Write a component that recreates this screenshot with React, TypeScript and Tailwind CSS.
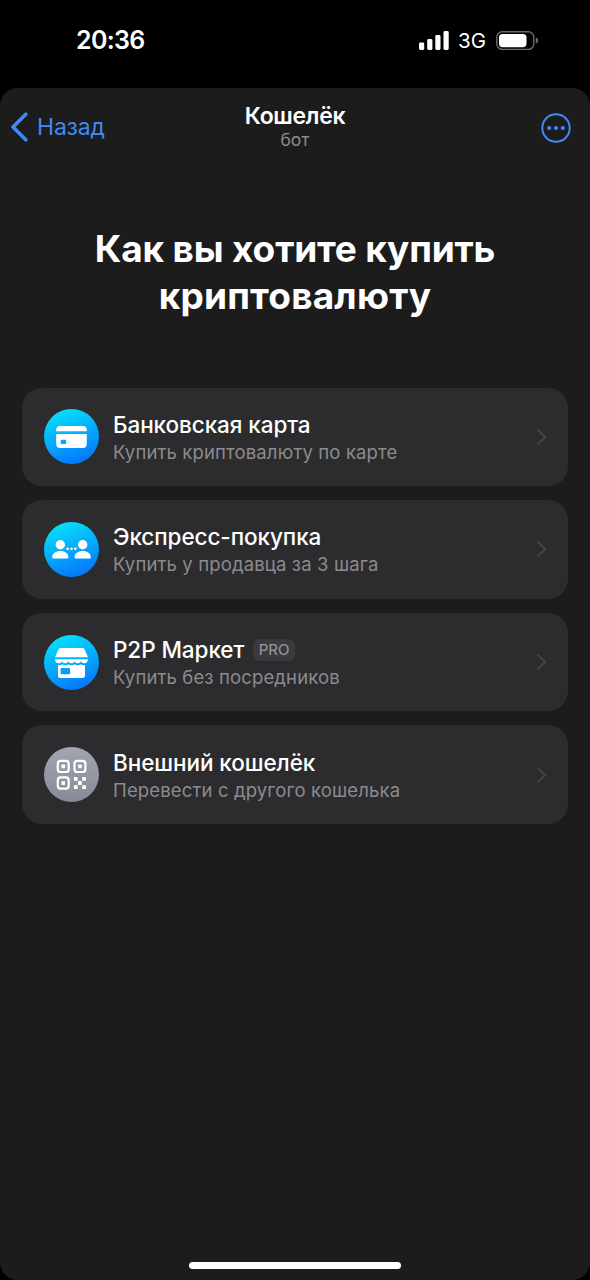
import type { ReactNode } from 'react';

type Option = {
  id: string;
  title: string;
  subtitle: string;
  badge?: string;
  iconClass: string;
  icon: ReactNode;
};

const blue = 'bg-linear-[160deg] from-[#05ecfc] to-[#0568fb]';
const grey = 'bg-linear-to-b from-[#a3a6b1] to-[#878a97]';

function CardIcon() {
  return (
    <svg viewBox="0 0 55 55" className="size-full" fill="#fff">
      <path d="M12.2 22.2V21a4 4 0 0 1 4-4h22.6a4 4 0 0 1 4 4v1.2z" />
      <path
        fillRule="evenodd"
        d="M12.2 25h30.6v10a4 4 0 0 1-4 4H16.2a4 4 0 0 1-4-4zM17.6 30.8a1 1 0 0 0-1 1v2.1a1 1 0 0 0 1 1h3.6a1 1 0 0 0 1-1v-2.1a1 1 0 0 0-1-1z"
      />
    </svg>
  );
}

function PeopleIcon() {
  return (
    <svg viewBox="0 0 55 55" className="size-full" fill="#fff">
      <circle cx="16.3" cy="22.8" r="4.7" />
      <circle cx="38.7" cy="22.8" r="4.7" />
      <path d="M8.2 35c0-3.6 3.5-6 8.1-6s8.1 2.4 8.1 6c0 1-.6 1.5-1.5 1.5H9.7c-.9 0-1.5-.5-1.5-1.5z" />
      <path d="M30.6 35c0-3.6 3.5-6 8.1-6s8.1 2.4 8.1 6c0 1-.6 1.5-1.5 1.5H32.1c-.9 0-1.5-.5-1.5-1.5z" />
      <circle cx="23.6" cy="26.7" r="1.3" />
      <circle cx="27.5" cy="26.7" r="1.3" />
      <circle cx="31.4" cy="26.7" r="1.3" />
    </svg>
  );
}

function ShopIcon() {
  return (
    <svg viewBox="0 0 55 55" className="size-full" fill="#fff">
      <path d="M14.2 14.9C14.7 13.6 15.7 13 17 13h21c1.3 0 2.3.6 2.8 1.9l3.2 7.4H11z" />
      <path d="M11 24.2h33c0 2.3-1.6 4.1-3.7 4.1-1.4 0-2.6-.7-3.3-1.8-.7 1.1-1.8 1.8-3.2 1.8s-2.5-.7-3.2-1.8c-.7 1.1-1.7 1.8-3.1 1.8s-2.4-.7-3.1-1.8c-.7 1.1-1.8 1.8-3.2 1.8s-2.5-.7-3.2-1.8c-.7 1.1-1.9 1.8-3.3 1.8-2.1 0-3.7-1.8-3.7-4.1z" />
      <path
        fillRule="evenodd"
        d="M14 30.1c1.6.3 2.8 0 4-.9 2 1.5 4.3 1.5 6.3 0 2 1.5 4.4 1.5 6.4 0 2 1.5 4.3 1.5 6.3 0 1.2.9 2.4 1.2 4 .9v10.4a2.5 2.5 0 0 1-2.5 2.5h-22a2.5 2.5 0 0 1-2.5-2.5zM17.6 33a1 1 0 0 0-1 1v4.3a1 1 0 0 0 1 1h7.5a1 1 0 0 0 1-1V34a1 1 0 0 0-1-1z"
      />
    </svg>
  );
}

function QrIcon() {
  return (
    <svg viewBox="0 0 55 55" className="size-full" fill="#fff">
      <g fill="none" stroke="#fff" strokeWidth="2.2">
        <rect x="13.8" y="13.8" width="10.9" height="11.2" rx="2.8" />
        <rect x="30.5" y="13.8" width="10.9" height="11.2" rx="2.8" />
        <rect x="13.8" y="30.4" width="10.9" height="11.2" rx="2.8" />
      </g>
      <rect x="17.4" y="17.6" width="3.7" height="3.7" rx=".6" />
      <rect x="34.1" y="17.6" width="3.7" height="3.7" rx=".6" />
      <rect x="17.4" y="34.2" width="3.7" height="3.7" rx=".6" />
      <rect x="29.9" y="30" width="3.7" height="3.7" rx=".5" />
      <rect x="38.2" y="30" width="3.7" height="3.7" rx=".5" />
      <rect x="34" y="34.1" width="3.8" height="3.8" rx=".5" />
      <rect x="29.9" y="38.2" width="3.7" height="3.7" rx=".5" />
      <rect x="38.2" y="38.2" width="3.7" height="3.7" rx=".5" />
    </svg>
  );
}

const options: Option[] = [
  {
    id: 'card',
    title: 'Банковская карта',
    subtitle: 'Купить криптовалюту по карте',
    iconClass: blue,
    icon: <CardIcon />,
  },
  {
    id: 'express',
    title: 'Экспресс-покупка',
    subtitle: 'Купить у продавца за 3 шага',
    iconClass: blue,
    icon: <PeopleIcon />,
  },
  {
    id: 'p2p',
    title: 'P2P Маркет',
    subtitle: 'Купить без посредников',
    badge: 'PRO',
    iconClass: blue,
    icon: <ShopIcon />,
  },
  {
    id: 'external',
    title: 'Внешний кошелёк',
    subtitle: 'Перевести с другого кошелька',
    iconClass: grey,
    icon: <QrIcon />,
  },
];

function StatusBar() {
  return (
    <div className="flex h-[88px] items-start justify-between pt-[25px] pr-[51px] pl-[76px] text-white">
      <span className="text-[25px] leading-[31px] font-semibold tracking-[-0.7px]">20:36</span>
      <div className="flex h-[31px] items-center">
        <svg viewBox="0 0 30 19" className="h-[19px] w-[30px]" fill="#fff">
          <rect x="0" y="11.5" width="5.2" height="7.5" rx="1.4" />
          <rect x="8.2" y="8" width="5.2" height="11" rx="1.4" />
          <rect x="16.3" y="4" width="5.2" height="15" rx="1.4" />
          <rect x="24.5" y="0" width="5.2" height="19" rx="1.4" />
        </svg>
        <span className="ml-[9px] w-[38px] text-[20.5px] leading-[31px]">3G</span>
        <svg viewBox="0 0 43 19" className="h-[19px] w-[43px]">
          <rect x=".8" y=".8" width="37" height="17.6" rx="5.5" fill="none" stroke="#6b6b6b" strokeWidth="1.4" />
          <rect x="3" y="3" width="27.5" height="13.2" rx="3.6" fill="#fff" />
          <path d="M39.8 6.5c1.6.6 2.4 1.7 2.4 3.1s-.8 2.5-2.4 3.1z" fill="#6b6b6b" />
        </svg>
      </div>
    </div>
  );
}

function Header() {
  return (
    <header className="grid h-[78px] grid-cols-[1fr_auto_1fr] items-center px-[10px]">
      <button className="flex items-center text-[#3f8af5]">
        <svg viewBox="0 0 18 30" className="h-[30px] w-[18px]" fill="none" stroke="currentColor" strokeWidth="3.6" strokeLinecap="round" strokeLinejoin="round">
          <path d="M15.8 2.2 3 15l12.8 12.8" />
        </svg>
        <span className="ml-[9px] text-[23px] leading-[30px] tracking-[-0.2px]">Назад</span>
      </button>
      <div className="text-center">
        <h1 className="text-[23px] leading-[28px] font-semibold tracking-[-0.3px] text-white">Кошелёк</h1>
        <p className="-mt-px mb-px text-[17.5px] leading-[22px] text-[#8d8d8f]">бот</p>
      </div>
      <button className="mr-[9px] justify-self-end pt-[2px] text-[#3f8af5]">
        <svg viewBox="0 0 30 30" className="size-[30px]" fill="currentColor">
          <circle cx="15" cy="15" r="13.7" fill="none" stroke="currentColor" strokeWidth="2" />
          <circle cx="8.2" cy="15" r="2.1" />
          <circle cx="15" cy="15" r="2.1" />
          <circle cx="21.8" cy="15" r="2.1" />
        </svg>
      </button>
    </header>
  );
}

function OptionRow({ option }: { option: Option }) {
  return (
    <button className="flex h-[98.6px] w-full items-center rounded-[20px] bg-[#2c2c2e] pr-[19px] pl-[22px] text-left">
      <div className={`size-[55px] shrink-0 rounded-full ${option.iconClass}`}>{option.icon}</div>
      <div className="ml-[14px] flex-1 pt-[3px]">
        <div className="flex items-center">
          <span className="text-[22.5px] leading-[28px] font-medium tracking-[-0.08px] text-white">{option.title}</span>
          {option.badge && (
            <span className="ml-[9px] rounded-[7px] bg-[#3a3a3e] px-[5.5px] text-[15px] leading-[22px] text-[#9a9a9f]">
              {option.badge}
            </span>
          )}
        </div>
        <p className="text-[18.5px] leading-[27px] tracking-[0.14px] text-[#8b8b8e]">{option.subtitle}</p>
      </div>
      <svg viewBox="0 0 14 20" className="h-[20px] w-[14px]" fill="none" stroke="#424244" strokeWidth="2.3">
        <path d="M2.5 2.5 10 10l-7.5 7.5" />
      </svg>
    </button>
  );
}

export default function App() {
  return (
    <div className="flex h-[1280px] w-[590px] flex-col overflow-hidden bg-black font-['Inter',sans-serif]">
      <StatusBar />
      <main className="flex flex-1 flex-col rounded-[18px] bg-[#1c1c1c]">
        <Header />
        <h2 className="mt-[59px] text-center text-[37px] leading-[47px] font-bold text-white">
          <span className="tracking-[-0.15px]">Как вы хотите купить</span>
          <br />
          <span className="tracking-[0.2px]">криптовалюту</span>
        </h2>
        <div className="mt-[68.6px] flex flex-col gap-[14px] px-[22px]">
          {options.map(option => (
            <OptionRow key={option.id} option={option} />
          ))}
        </div>
        <div className="mx-auto mt-auto mb-[11px] h-[7px] w-[212px] rounded-full bg-white" />
      </main>
    </div>
  );
}
